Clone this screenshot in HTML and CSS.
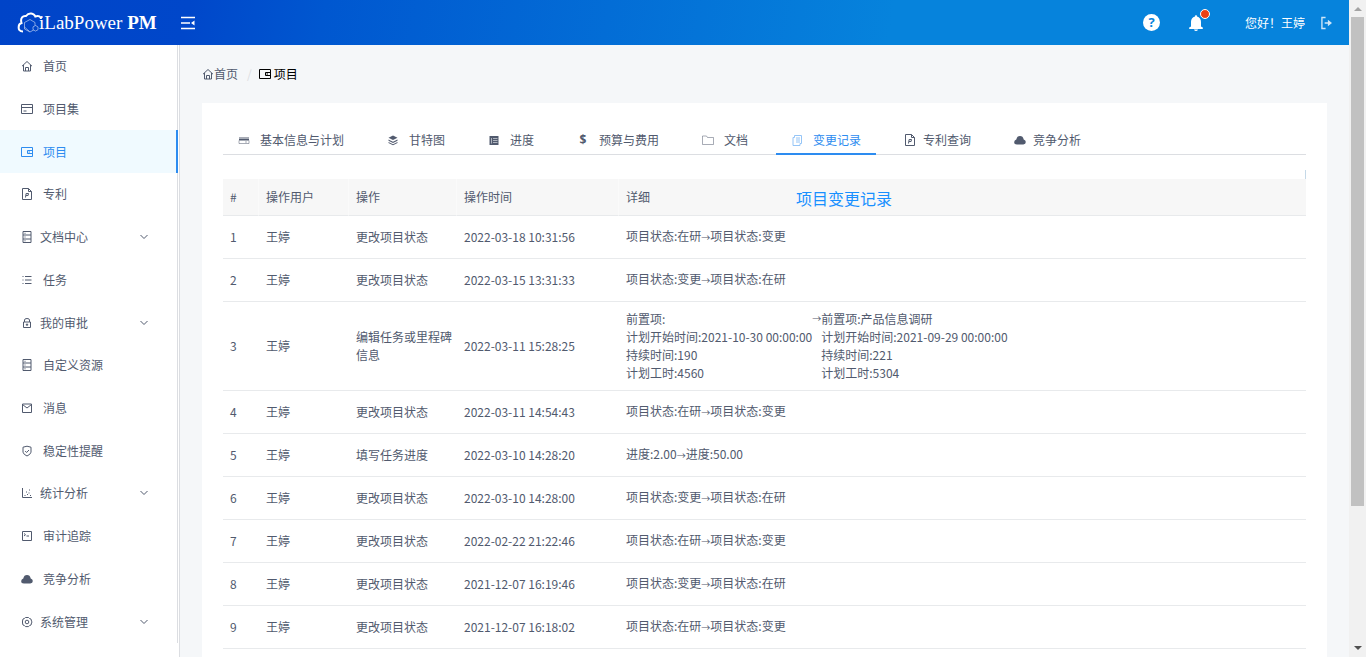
FILE: index.html
```html
<!DOCTYPE html>
<html lang="zh-CN">
  <head>
    <meta charset="utf-8" />
    <title>iLabPower PM</title>
    <meta name="viewport" content="width=device-width, initial-scale=1" />
    <link rel="stylesheet" href="styles.css">
  </head>
  <body>
    <svg class="sprite" aria-hidden="true">
      <symbol id="home" viewBox="0 0 12 12"><path d="M1 6.200 6 1.500l5 4.700M2.500 5v6h7V5M4.500 11V7.500h3V11"/></symbol>
      <symbol id="card" viewBox="0 0 12 12"><path d="M.5 1.500h11v9H.5zM.5 4.500h11M2.500 8h3"/></symbol>
      <symbol id="wallet" viewBox="0 0 12 12"><path d="M.5 1.500h11v9H.5zM11.500 4.500h-5v3h5M7.500 6h1.500"/></symbol>
      <symbol id="file" viewBox="0 0 12 12"><path d="M1.500.5h6l3 3v8h-9zM7.500.5v3h3M4.500 9.500l.6-4h2.400l-.4 2H5"/></symbol>
      <symbol id="rack" viewBox="0 0 12 12"><path d="M2 .5h8v11H2zM2 4h8M2 8h8M3.500 2.300h1M3.500 6h1M3.500 9.800h1"/></symbol>
      <symbol id="list" viewBox="0 0 12 12"><path d="M4 2.500h6.500M4 6h6.500M4 9.500h6.500M1.500 2.500h1M1.500 6h1M1.500 9.500h1"/></symbol>
      <symbol id="lock" viewBox="0 0 12 12"><path d="M2.500 5h7v5.500h-7zM3.500 5V3q0-1.500 2.500-1.500T8.500 3v2M6 6.500V9M4.800 7.700h2.400"/></symbol>
      <symbol id="mail" viewBox="0 0 12 12"><path d="M1.500 2h9v8.500h-9zM1.500 2.500 6 6l4.500-3.500"/></symbol>
      <symbol id="shield" viewBox="0 0 12 12"><path d="M6 1.200 10 2.200v5Q9.500 9.500 6 11 2.500 9.500 2 7.200v-5zM4.200 6l1.400 1.500L8 5"/></symbol>
      <symbol id="chart" viewBox="0 0 12 12"><path d="M1.500 1v9.500H11M3.500 8.500h1M6 7.500h1M5 5h1M8 3h1M9 8.500h1M7.500 6h1"/></symbol>
      <symbol id="code" viewBox="0 0 12 12"><path d="M1.500 1.500h9v9h-9zM3 3.500l1.500 1.200L3 6M5.500 6h2.500"/></symbol>
      <symbol id="cloud" viewBox="0 0 12 12"><path class="solid" d="M3 10.500Q0 10.500.2 8 .3 6 2.300 5.400 3 2 6 2t3.700 3.400Q11.800 6 11.800 8T9.300 10.500z"/></symbol>
      <symbol id="gear" viewBox="0 0 12 12"><path d="M4.500 1.500h3l1 1 1.500.6.5 2L11 6l-.5 1-.5 2-1.500.6-1 1h-3l-1-1L2 9l-.5-2V5L2 3l1.500-.6z"/><circle cx="6" cy="6" r="1.800"/></symbol>
      <symbol id="arrow" viewBox="0 0 12 12"><path d="m2.500 4 3.500 3.500L9.500 4"/></symbol>
      <symbol id="bank" viewBox="0 0 12 12"><path class="solid" d="M1 4.500h10v2H1z"/><path class="pale" d="M1 3.500h10M1 9.500h10V6.500M1 9.500v-3M7 8h2"/></symbol>
      <symbol id="layers" viewBox="0 0 12 12"><path class="solid" d="m6 1.500 4.500 2.200L6 6 1.500 3.700zM1.500 5.500 6 7.700l4.500-2.200v1.200L6 9 1.500 6.700zM1.500 8 6 10.200 10.500 8v1L6 11.300 1.500 9z"/></symbol>
      <symbol id="grid" viewBox="0 0 12 12"><path class="solid" d="M1.500 2h9v9h-9z"/><path class="rule" d="M3.500 4v5.500M5 4.500h4.500M5 6.500h4.500M5 8.500h4.500"/></symbol>
      <symbol id="folder" viewBox="0 0 12 12"><path class="pale" d="M.5 2h4l1 1.500h6v7H.5z"/></symbol>
      <symbol id="copy" viewBox="0 0 12 12"><path d="M3.500 1.500h7v8h-1.500v2h-7v-8h1.500zM5 4h4M5 6h4M5 8h4"/></symbol>
    </svg>

    <header class="topbar">
      <a class="logo" href="#">
        <svg class="logo-mark" viewBox="0 0 26 22">
          <path class="cloud-line" d="M6 19.500C2.500 19.500 1.500 17 1.700 15.500 1.500 13 3 11.500 4.500 11 3 6 6 3.500 9 4 12-.2 17 1.200 18.300 4.500 21.500 3.300 24 4.500 24 7"/>
          <path class="hex-line" d="m13 7.500 5 3v3M13 7.500l-5.500 3V17l5.500 3 3.500-2M7.500 15l5 4.500M18.500 13.500l2.500 1.400v2.800l-2.500 1.400-2.500-1.400v-2.800z"/>
        </svg>
        <span>iLabPower <b>PM</b></span>
      </a>
      <button class="fold" type="button" aria-label="折叠菜单">
        <svg viewBox="0 0 14 14"><path d="M0 1.500h14M0 7h9M0 12.500h14"/><path class="solid" d="m13.500 4.500-3.500 2.500 3.500 2.500z"/></svg>
      </button>
      <div class="tools">
        <button class="help" type="button" aria-label="帮助">?</button>
        <button class="bell" type="button" aria-label="通知">
          <svg viewBox="0 0 14 16"><path d="M6 1.500Q6 0 7 0t1 1.500Q12 2.500 12 7v4.500l1.800 1V14H.2v-1.500l1.800-1V7q0-4.500 4-5.500zM5 14.500h4Q8.500 16 7 16t-2-1.500z"/></svg>
          <i class="dot"></i>
        </button>
        <span class="hello">您好！王婷</span>
        <button class="exit" type="button" aria-label="退出">
          <svg viewBox="0 0 12 14"><path d="M5 1H1v12h4M4 7h6"/><path class="solid" d="M7.500 3.500 12 7l-4.500 3.500z"/></svg>
        </button>
      </div>
    </header>

    <div class="layout">
      <nav class="sidebar">
        <ul class="menu">
          <li><a href="#"><svg class="icon"><use href="#home"/></svg><span>首页</span></a></li>
          <li><a href="#"><svg class="icon"><use href="#card"/></svg><span>项目集</span></a></li>
          <li><a class="active" href="#"><svg class="icon"><use href="#wallet"/></svg><span>项目</span></a></li>
          <li><a href="#"><svg class="icon"><use href="#file"/></svg><span>专利</span></a></li>
          <li><a class="sub" href="#"><svg class="icon"><use href="#rack"/></svg><span>文档中心</span><svg class="icon arrow"><use href="#arrow"/></svg></a></li>
          <li><a href="#"><svg class="icon"><use href="#list"/></svg><span>任务</span></a></li>
          <li><a class="sub" href="#"><svg class="icon"><use href="#lock"/></svg><span>我的审批</span><svg class="icon arrow"><use href="#arrow"/></svg></a></li>
          <li><a href="#"><svg class="icon"><use href="#rack"/></svg><span>自定义资源</span></a></li>
          <li><a href="#"><svg class="icon"><use href="#mail"/></svg><span>消息</span></a></li>
          <li><a href="#"><svg class="icon"><use href="#shield"/></svg><span>稳定性提醒</span></a></li>
          <li><a class="sub" href="#"><svg class="icon"><use href="#chart"/></svg><span>统计分析</span><svg class="icon arrow"><use href="#arrow"/></svg></a></li>
          <li><a href="#"><svg class="icon"><use href="#code"/></svg><span>审计追踪</span></a></li>
          <li><a href="#"><svg class="icon"><use href="#cloud"/></svg><span>竞争分析</span></a></li>
          <li><a class="sub" href="#"><svg class="icon"><use href="#gear"/></svg><span>系统管理</span><svg class="icon arrow"><use href="#arrow"/></svg></a></li>
        </ul>
      </nav>

      <main class="content">
        <div class="breadcrumb">
          <a href="#"><svg class="icon"><use href="#home"/></svg>首页</a>
          <span class="slash">/</span>
          <a class="current" href="#"><svg class="icon"><use href="#wallet"/></svg>项目</a>
        </div>

        <section class="card">
          <div class="tabs">
            <a href="#"><svg class="icon"><use href="#bank"/></svg>基本信息与计划</a>
            <a href="#"><svg class="icon"><use href="#layers"/></svg>甘特图</a>
            <a href="#"><svg class="icon"><use href="#grid"/></svg>进度</a>
            <a href="#"><b class="icon dollar">$</b>预算与费用</a>
            <a href="#"><svg class="icon"><use href="#folder"/></svg>文档</a>
            <a class="active" href="#"><svg class="icon"><use href="#copy"/></svg>变更记录</a>
            <a class="tight" href="#"><svg class="icon"><use href="#file"/></svg>专利查询</a>
            <a class="tight" href="#"><svg class="icon"><use href="#cloud"/></svg>竞争分析</a>
          </div>

          <div class="records">
            <div class="note">项目变更记录</div>
            <table>
              <colgroup>
                <col class="c-no"><col class="c-user"><col class="c-action"><col class="c-time"><col>
              </colgroup>
              <thead>
                <tr><th>#</th><th>操作用户</th><th>操作</th><th>操作时间</th><th>详细</th></tr>
              </thead>
              <tbody>
                <tr><td>1</td><td>王婷</td><td>更改项目状态</td><td>2022-03-18 10:31:56</td><td>项目状态:在研<span class="to">→</span>项目状态:变更</td></tr>
                <tr><td>2</td><td>王婷</td><td>更改项目状态</td><td>2022-03-15 13:31:33</td><td>项目状态:变更<span class="to">→</span>项目状态:在研</td></tr>
                <tr>
                  <td>3</td><td>王婷</td><td>编辑任务或里程碑信息</td><td>2022-03-11 15:28:25</td>
                  <td>
                    <div class="diff">
                      <div>前置项:<br>计划开始时间:2021-10-30 00:00:00<br>持续时间:190<br>计划工时:4560</div>
                      <span class="to">→</span>
                      <div>前置项:产品信息调研<br>计划开始时间:2021-09-29 00:00:00<br>持续时间:221<br>计划工时:5304</div>
                    </div>
                  </td>
                </tr>
                <tr><td>4</td><td>王婷</td><td>更改项目状态</td><td>2022-03-11 14:54:43</td><td>项目状态:在研<span class="to">→</span>项目状态:变更</td></tr>
                <tr><td>5</td><td>王婷</td><td>填写任务进度</td><td>2022-03-10 14:28:20</td><td>进度:2.00<span class="to">→</span>进度:50.00</td></tr>
                <tr><td>6</td><td>王婷</td><td>更改项目状态</td><td>2022-03-10 14:28:00</td><td>项目状态:变更<span class="to">→</span>项目状态:在研</td></tr>
                <tr><td>7</td><td>王婷</td><td>更改项目状态</td><td>2022-02-22 21:22:46</td><td>项目状态:在研<span class="to">→</span>项目状态:变更</td></tr>
                <tr><td>8</td><td>王婷</td><td>更改项目状态</td><td>2021-12-07 16:19:46</td><td>项目状态:变更<span class="to">→</span>项目状态:在研</td></tr>
                <tr><td>9</td><td>王婷</td><td>更改项目状态</td><td>2021-12-07 16:18:02</td><td>项目状态:在研<span class="to">→</span>项目状态:变更</td></tr>
              </tbody>
            </table>
          </div>
        </section>
      </main>
    </div>

    <div class="scrollbar" aria-hidden="true">
      <i class="up"></i>
      <i class="thumb"></i>
      <i class="down"></i>
    </div>
  </body>
</html>
```
FILE: styles.css
```css
* {box-sizing: border-box;}

body {
  margin: 0;
  height: 100vh;
  padding-right: 17px;
  overflow: hidden;
  display: flex;
  flex-direction: column;
  background: #f5f7f9;
  color: #515a6e;
  font: 12px/18px "Noto Sans CJK SC", sans-serif;
}

a {
  color: inherit;
  text-decoration: none;
}

button {
  padding: 0;
  border: 0;
  background: none;
  color: inherit;
  cursor: pointer;
}

svg {
  display: block;
  fill: none;
  stroke: currentColor;
}

.sprite {
  position: absolute;
  width: 0;
  height: 0;
}

.icon {
  flex: none;
  width: 12px;
  height: 12px;
}

.solid {
  fill: currentColor;
  stroke: none;
}

.pale {
  opacity: 0.5;
}

.rule {
  stroke: #aeb3bd;
}

/* top bar */

.topbar {
  flex: none;
  height: 45px;
  padding: 0 17px;
  display: flex;
  align-items: center;
  color: #fff;
  background: linear-gradient(100deg, #0044c8 0%, #0047ca 14%, #0057d0 24%, #0683dc 66%, #0683dc 100%);
}

.logo {
  display: flex;
  align-items: center;
  width: 164px;
  font: 19px/24px "Liberation Serif", serif;
  white-space: nowrap;
}

.logo-mark {
  flex: none;
  width: 26px;
  height: 22px;
  margin-right: -4px;
}

.cloud-line {
  stroke-width: 2;
}

.hex-line {
  opacity: 0.5;
}

.fold svg {
  width: 14px;
  height: 14px;
  stroke-width: 1.5;
}

.tools {
  margin-left: auto;
  display: flex;
  align-items: center;
}

.help {
  width: 17px;
  height: 17px;
  border-radius: 50%;
  background: #fff;
  color: #0683dc;
  font: bold 13px/17px "Open Sans", sans-serif;
}

.bell {
  position: relative;
  margin: 0 42px 0 29px;
}

.bell svg {
  width: 14px;
  height: 16px;
  fill: #fff;
  stroke: none;
}

.dot {
  position: absolute;
  top: -6px;
  left: 11px;
  width: 10px;
  height: 10px;
  border: 1px solid #fff;
  border-radius: 50%;
  background: #ed4014;
}

.exit {
  margin-left: 16px;
  opacity: 0.8;
}

.exit svg {
  width: 11px;
  height: 14px;
  stroke-width: 1.5;
}

/* side menu */

.layout {
  flex: 1;
  min-height: 0;
  display: flex;
}

.sidebar {
  flex: none;
  width: 180px;
  padding: 0 1px 14px 0;
  border-right: 1px solid #dcdee2;
  background: #fff;
}

.menu {
  height: 100%;
  margin: 0;
  padding: 0;
  display: grid;
  grid-auto-rows: 1fr;
  border-right: 1px solid #dcdee2;
  list-style: none;
}

.menu a {
  height: 100%;
  padding: 0 27px 0 21px;
  display: flex;
  align-items: center;
  gap: 10px;
}

.menu .sub {
  gap: 7px;
}

.menu .active {
  margin-right: -1px;
  color: #2d8cf0;
  background: #f0faff;
  border-right: 2px solid #2d8cf0;
}

.arrow {
  margin-left: auto;
}

/* content */

.content {
  flex: 1;
  min-width: 0;
  padding: 20px 22px 0;
  display: flex;
  flex-direction: column;
}

.breadcrumb {
  display: flex;
  align-items: center;
  padding-bottom: 20px;
}

.breadcrumb a {
  display: flex;
  align-items: center;
}

.slash {
  margin: 0 7px 0 9px;
  color: #dcdee2;
}

.breadcrumb .current {
  gap: 3px;
  color: #000;
}

.card {
  flex: 1;
  padding: 22px 21px 0;
  background: #fff;
}

.tabs {
  display: flex;
  gap: 13px;
  height: 30px;
  border-bottom: 1px solid #dcdee2;
}

.tabs a {
  height: 30px;
  padding: 2px 15px;
  display: flex;
  align-items: center;
  gap: 10px;
  white-space: nowrap;
}

.tabs .tight {
  gap: 7px;
}

.tabs .active {
  padding-bottom: 0;
  color: #2d8cf0;
  border-bottom: 2px solid #2d8cf0;
}

.tabs .active .icon {
  opacity: 0.5;
}

.dollar {
  font: bold 12px/12px "Open Sans", sans-serif;
  text-align: center;
}

.records {
  position: relative;
  margin-top: 15px;
  padding-top: 9px;
}

.records::before {
  content: "";
  position: absolute;
  top: 0;
  right: 0;
  width: 1px;
  height: 9px;
  background: #c5d9e8;
}

.note {
  position: absolute;
  top: 16px;
  left: 573px;
  color: #1890ff;
  font-size: 16px;
  line-height: 24px;
}

table {
  width: 100%;
  table-layout: fixed;
  border-spacing: 0;
}

.c-no {
  width: 36px;
}

.c-user {
  width: 90px;
}

.c-action {
  width: 108px;
}

.c-time {
  width: 162px;
}

th, td {
  height: 43px;
  padding: 0 4px 0 7px;
  border-bottom: 1px solid #e8eaec;
  text-align: left;
  font-weight: normal;
}

th {
  height: 37px;
  background: #f7f7f7;
}

th:not(:last-child) {
  border-right: 1px solid #fafafa;
}

.diff {
  display: flex;
  padding: 8px 0;
}

.to {
  font-size: 9px;
}

/* page scrollbar */

.scrollbar {
  position: fixed;
  top: 0;
  right: 0;
  bottom: 0;
  width: 17px;
  padding: 7px 2px;
  display: flex;
  flex-direction: column;
  align-items: center;
  background: #f1f1f1;
}

.up, .down {
  border: 4px solid transparent;
  border-top-width: 0;
  border-bottom: 4px solid #a3a3a3;
}

.down {
  margin-top: auto;
  border-top: 4px solid #505050;
  border-bottom-width: 0;
}

.thumb {
  width: 13px;
  height: 76%;
  margin-top: 6px;
  background: #c1c1c1;
}
```
